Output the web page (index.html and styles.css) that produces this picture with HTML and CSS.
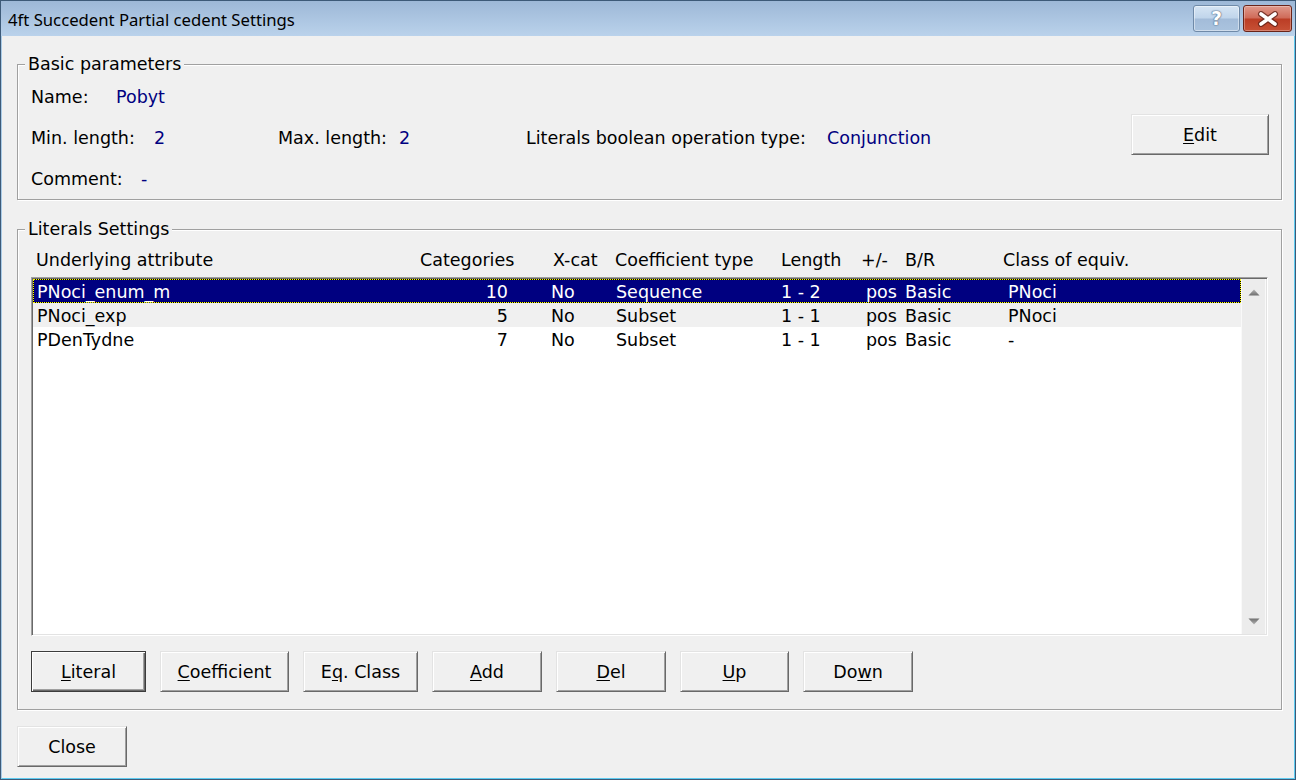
FILE: index.html
```html
<!DOCTYPE html>
<html lang="en">
<head>
<meta charset="utf-8">
<title>4ft Succedent Partial cedent Settings</title>
<link rel="stylesheet" href="styles.css">
</head>
<body>
<div class="window">
  <div class="titlebar">
    <span class="title">4ft Succedent Partial cedent Settings</span>
    <div class="caption-btns">
      <div class="cbtn help"><span class="qmark">?</span></div>
      <div class="cbtn close">
        <svg width="22" height="16" viewBox="0 0 22 16">
          <path d="M4 3 L18 13 M18 3 L4 13" stroke="#5a1f17" stroke-width="6" stroke-linecap="round" fill="none" opacity="0.75"/>
          <path d="M4 3 L18 13 M18 3 L4 13" stroke="#ffffff" stroke-width="3.6" stroke-linecap="round" fill="none"/>
        </svg>
      </div>
    </div>
  </div>
  <div class="client">
    <fieldset class="group basic">
      <legend>Basic parameters</legend>
      <div class="basic-body">
        <div class="fields">
          <div class="frow">
            <span class="cell w85">Name:</span><span class="val">Pobyt</span>
          </div>
          <div class="frow">
            <span class="cell w123">Min. length:</span><span class="cell w124 val">2</span>
            <span class="cell w121">Max. length:</span><span class="cell w127 val">2</span>
            <span class="cell w301">Literals boolean operation type:</span><span class="val">Conjunction</span>
          </div>
          <div class="frow last">
            <span class="cell w110">Comment:</span><span class="val">-</span>
          </div>
        </div>
        <button class="btn edit"><u>E</u>dit</button>
      </div>
    </fieldset>

    <fieldset class="group literals">
      <legend>Literals Settings</legend>
      <div class="list-head">
        <span>Underlying attribute</span>
        <span>Categories</span>
        <span>X-cat</span>
        <span>Coefficient type</span>
        <span>Length</span>
        <span>+/-</span>
        <span>B/R</span>
        <span>Class of equiv.</span>
      </div>
      <div class="listbox">
        <div class="rows">
          <div class="lrow sel">
            <span class="c-name">PNoci_enum_m</span><span class="c-cat">10</span><span class="c-x">No</span><span class="c-coef">Sequence</span><span class="c-len">1 - 2</span><span class="c-pm">pos</span><span class="c-br">Basic</span><span class="c-cls">PNoci</span>
          </div>
          <div class="lrow alt">
            <span class="c-name">PNoci_exp</span><span class="c-cat">5</span><span class="c-x">No</span><span class="c-coef">Subset</span><span class="c-len">1 - 1</span><span class="c-pm">pos</span><span class="c-br">Basic</span><span class="c-cls">PNoci</span>
          </div>
          <div class="lrow">
            <span class="c-name">PDenTydne</span><span class="c-cat">7</span><span class="c-x">No</span><span class="c-coef">Subset</span><span class="c-len">1 - 1</span><span class="c-pm">pos</span><span class="c-br">Basic</span><span class="c-cls">-</span>
          </div>
        </div>
        <div class="vscroll">
          <svg width="12" height="7" viewBox="0 0 12 7"><defs><linearGradient id="ga" x1="0" y1="0" x2="0" y2="1"><stop offset="0" stop-color="#b4b4b4"/><stop offset="1" stop-color="#6e6e6e"/></linearGradient></defs><polygon points="6,0.5 11.5,6.5 0.5,6.5" fill="url(#ga)"/></svg>
          <svg width="12" height="7" viewBox="0 0 12 7"><defs><linearGradient id="gb" x1="0" y1="0" x2="0" y2="1"><stop offset="0" stop-color="#6e6e6e"/><stop offset="1" stop-color="#b4b4b4"/></linearGradient></defs><polygon points="0.5,0.5 11.5,0.5 6,6.5" fill="url(#gb)"/></svg>
        </div>
      </div>
      <div class="btnrow">
        <button class="btn default b-literal"><u>L</u>iteral</button>
        <button class="btn b-coef"><u>C</u>oefficient</button>
        <button class="btn b-eq">E<u>q</u>. Class</button>
        <button class="btn b-add"><u>A</u>dd</button>
        <button class="btn b-del"><u>D</u>el</button>
        <button class="btn b-up"><u>U</u>p</button>
        <button class="btn b-down">Do<u>w</u>n</button>
      </div>
    </fieldset>

    <button class="btn close-btn">Close</button>
  </div>
</div>
</body>
</html>
```
FILE: styles.css
```css
* { box-sizing: border-box; }
html, body { margin: 0; padding: 0; }
body {
  width: 1296px;
  height: 780px;
  overflow: hidden;
  background: #f0f0f0;
  font-family: "DejaVu Sans", "Liberation Sans", sans-serif;
  font-size: 17.5px;
  color: #000;
}

.window {
  width: 1296px;
  height: 780px;
  display: flex;
  flex-direction: column;
  border: 1px solid #3d5a78;
  background: #f0f0f0;
}

/* ---------- title bar ---------- */
.titlebar {
  height: 35px;
  flex: none;
  display: flex;
  align-items: flex-start;
  background: linear-gradient(#9db8d7, #bad2eb);
}
.title {
  font-family: "Noto Sans", "Open Sans", sans-serif;
  font-size: 16.7px;
  line-height: 22px;
  padding: 8px 0 0 7px;
  color: #000;
  white-space: nowrap;
}
.caption-btns {
  margin-left: auto;
  margin-top: 4px;
  margin-right: 3px;
  display: flex;
  gap: 3px;
}
.cbtn {
  height: 27px;
  border-radius: 3px;
  display: flex;
  align-items: center;
  justify-content: center;
}
.cbtn.help {
  width: 47px;
  border: 1px solid #6f8aa8;
  background: linear-gradient(#d6e5f4 0%, #c0d5eb 48%, #a3bcd9 52%, #aac3de 100%);
  box-shadow: inset 0 0 0 1px rgba(255,255,255,0.45);
}
.qmark {
  font-family: "DejaVu Sans", sans-serif;
  font-weight: bold;
  font-size: 19px;
  line-height: 19px;
  color: #fff;
  text-shadow: 0 0 1px #4d6580, 0 0 1px #4d6580, 0 0 2px #6a829d;
}
.cbtn.close {
  width: 49px;
  border: 1px solid #6a2419;
  background: linear-gradient(#e09a8c 0%, #cf6a58 48%, #bb3d25 52%, #c75136 100%);
  box-shadow: inset 0 0 0 1px rgba(255,255,255,0.3);
}

/* ---------- client ---------- */
.client {
  flex: 1;
  display: flex;
  flex-direction: column;
  align-items: flex-start;
  padding: 17px 12px 0 15px;
  border-left: 1px solid #a9cbe7;
  border-right: 1px solid #5ecbf0;
  border-bottom: 1px solid #5ecbf0;
  background: #f0f0f0;
}

.group {
  align-self: stretch;
  margin: 0;
  min-width: 0;
  padding: 0 12px 0 13px;
  border: 1px solid #a0a0a0;
  box-shadow: inset 1px 1px 0 #fff, 1px 1px 0 #fff;
}
.group legend {
  padding: 0 3px;
  margin-left: -6px;
  line-height: 22px;
  background: #f0f0f0;
}

/* basic parameters */
.basic-body {
  display: flex;
  padding-top: 2px;
}
.fields { flex: 1; }
.frow {
  display: flex;
  height: 41px;
  line-height: 41px;
  white-space: nowrap;
}
.frow.last { height: 40px; }
.cell { flex: none; }
.w85 { width: 85px; }
.w110 { width: 110px; }
.w121 { width: 121px; }
.w123 { width: 123px; }
.w124 { width: 124px; }
.w127 { width: 127px; }
.w301 { width: 301px; }
.val { color: #000080; }

/* buttons */
.btn {
  font: inherit;
  color: #000;
  height: 41px;
  padding: 0;
  background: #f0f0f0;
  border: 1px solid;
  border-color: #e3e3e3 #696969 #696969 #e3e3e3;
  box-shadow: inset 1px 1px 0 #fff, inset -1px -1px 0 #a0a0a0;
  white-space: nowrap;
}
.btn u { text-underline-offset: 2px; }
.btn.default {
  border-color: #3c3c3c;
  box-shadow: inset 1px 1px 0 #fff, inset -1px -1px 0 #696969, inset -2px -2px 0 #a0a0a0;
}
.edit {
  flex: none;
  width: 138px;
  margin-top: 37px;
}

/* literals settings */
.literals { margin-top: 18px; padding-bottom: 17px; }
.list-head {
  margin-top: 9px;
  height: 22px;
  line-height: 22px;
  padding-left: 5px;
  display: grid;
  grid-template-columns: 384px 133px 62px 166px 80px 44px 98px 1fr;
  white-space: nowrap;
}
.listbox {
  margin: 6px 1px 0 0;
  height: 359px;
  display: flex;
  padding: 1px;
  border: 1px solid;
  border-color: #a0a0a0 #fff #fff #a0a0a0;
  box-shadow: inset 1px 1px 0 #696969, inset -1px -1px 0 #e3e3e3;
  background: #fff;
}
.rows {
  flex: 1;
  min-width: 0;
}
.lrow {
  display: flex;
  height: 24px;
  line-height: 26px;
  padding-left: 4px;
  white-space: nowrap;
  background: #fff;
}
.lrow.alt { background: #f0f0f0; }
.lrow.sel {
  background: #000080;
  color: #fff;
  box-shadow: inset 0 0 0 1px #000;
  outline: 1px dotted #ffff00;
  outline-offset: -1px;
}
.lrow span { flex: none; }
.c-name { width: 383px; }
.c-cat { width: 88px; text-align: right; }
.c-x { width: 108px; padding-left: 43px; }
.c-coef { width: 165px; }
.c-len { width: 85px; }
.c-pm { width: 39px; }
.c-br { width: 103px; }

.vscroll {
  flex: none;
  width: 25px;
  display: flex;
  flex-direction: column;
  align-items: center;
  justify-content: space-between;
  padding: 10px 0 9px;
  background: #ececec;
  border-left: 1px solid #f9f9f9;
  border-right: 1px solid #f9f9f9;
}

.btnrow {
  margin-top: 15px;
  display: flex;
  gap: 14px;
}
.b-literal { width: 115px; }
.b-coef { width: 129px; }
.b-eq { width: 115px; }
.b-add { width: 110px; }
.b-del { width: 110px; }
.b-up { width: 109px; }
.b-down { width: 110px; }

.close-btn {
  margin-top: 16px;
  width: 110px;
}
```
